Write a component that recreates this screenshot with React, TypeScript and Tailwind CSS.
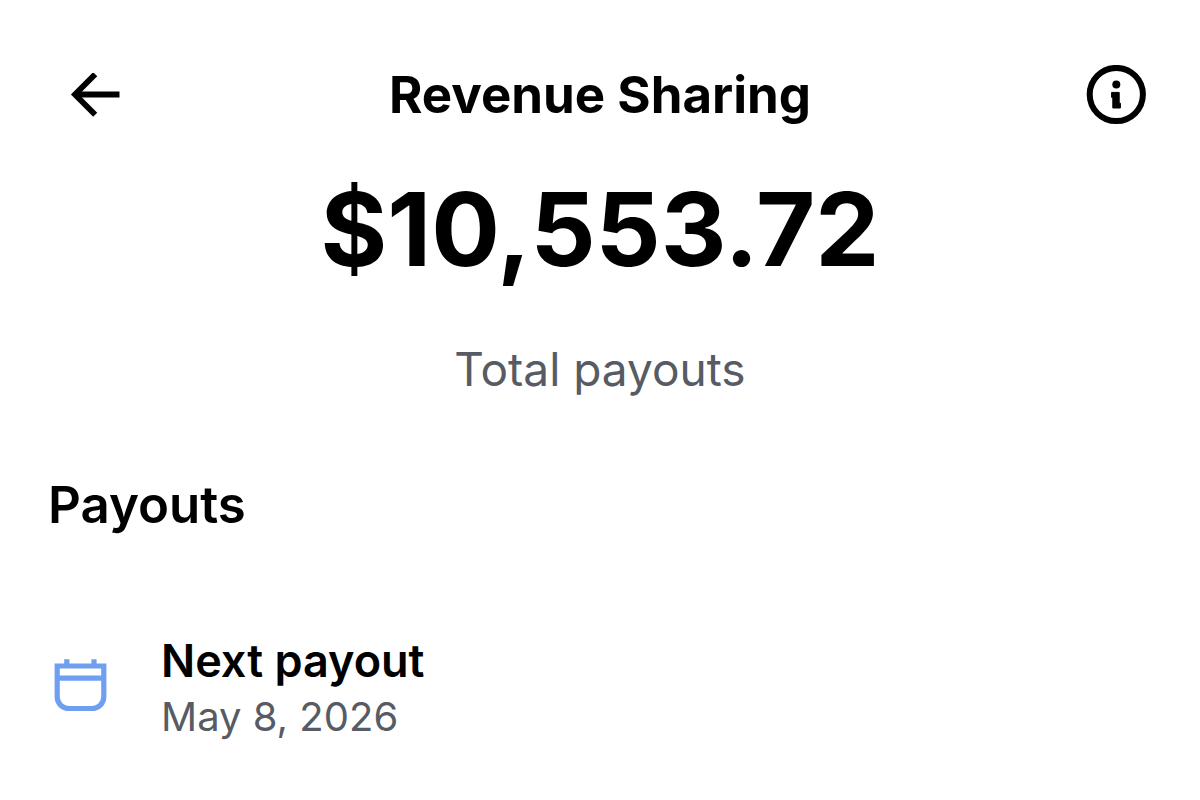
import React from 'react';

function ArrowLeftIcon() {
  return (
    <svg width="50" height="45" viewBox="0 0 50 45" fill="none" stroke="currentColor" strokeWidth="5.8" aria-hidden="true">
      <path d="M25.2 1.2 5 21.5l20.2 20.3" />
      <path d="M5 21.5h44.5" />
    </svg>
  );
}

function InfoIcon() {
  return (
    <svg width="60" height="60" viewBox="0 0 60 60" fill="none" aria-hidden="true">
      <circle cx="30.3" cy="29.5" r="26.6" stroke="currentColor" strokeWidth="6" />
      <circle cx="30.3" cy="19.4" r="4" fill="currentColor" />
      <path
        d="M25.6 27.4h7.6v10.8h1.2v4.8h-7.6v-10.6h-1.2z"
        fill="currentColor"
        stroke="currentColor"
        strokeWidth="1"
        strokeLinejoin="round"
      />
    </svg>
  );
}

function CalendarIcon() {
  return (
    <svg width="53" height="53" viewBox="0 0 53 53" fill="none" stroke="currentColor" strokeWidth="5.2" aria-hidden="true">
      <path d="M3.2 7h46.6v30.5c0 7-5 12-12 12H15.2c-7 0-12-5-12-12z" />
      <path d="M3.2 19.2h46.6" />
      <path d="M12.8 0.3V7M40 0.3V7" />
    </svg>
  );
}

export default function App() {
  return (
    <div className="min-h-screen bg-white font-['Inter',sans-serif] text-black">
      {/* Top bar */}
      <header className="grid grid-cols-[1fr_auto_1fr] items-center px-[54px] pt-[65px]">
        <button type="button" aria-label="Back" className="justify-self-start pl-4">
          <ArrowLeftIcon />
        </button>
        <h1 className="text-[51px] leading-[60px] font-bold">Revenue Sharing</h1>
        <button type="button" aria-label="About revenue sharing" className="justify-self-end">
          <InfoIcon />
        </button>
      </header>

      <main>
        {/* Total */}
        <section className="flex flex-col items-center pt-[54px] text-center">
          <p className="text-[102px] leading-[100px] font-bold">$10,553.72</p>
          <p className="pt-[62px] text-[46px] leading-[56px] text-[#565b64]">Total payouts</p>
        </section>

        {/* Payout list */}
        <section className="px-12 pt-19">
          <h2 className="text-[51px] leading-[64px] font-semibold">Payouts</h2>
          <ul className="pt-24">
            <li className="flex items-start gap-[54px] px-1.5">
              <span className="pt-[26px] text-[#6f9ff0]">
                <CalendarIcon />
              </span>
              <div>
                <p className="text-[45px] leading-[56px] font-semibold">Next payout</p>
                <p className="text-[40px] leading-[56px] text-[#565b64]">May 8, 2026</p>
              </div>
            </li>
          </ul>
        </section>
      </main>
    </div>
  );
}
